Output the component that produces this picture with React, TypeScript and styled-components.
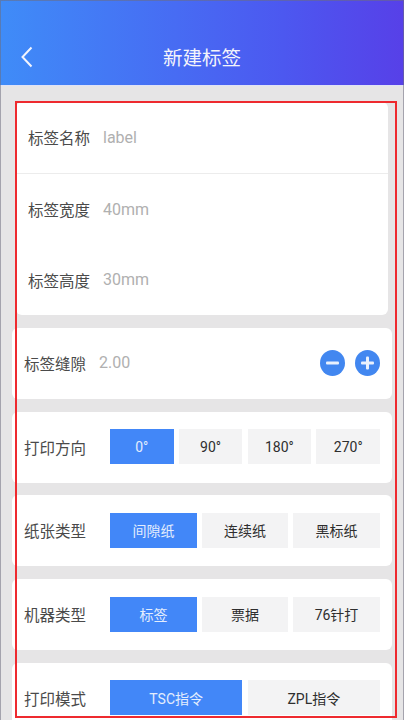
import React from 'react';
import styled, { createGlobalStyle } from 'styled-components';

const GlobalStyle = createGlobalStyle`
  html, body {
    margin: 0;
    padding: 0;
    background: #e6e5e6;
  }
  body {
    font-family: "Roboto", "Noto Sans CJK SC", sans-serif;
  }
`;

const Page = styled.div`
  position: relative;
  width: 404px;
  height: 720px;
  overflow: hidden;
  background: #e6e5e6;
  display: flex;
  flex-direction: column;
`;

const Header = styled.header`
  height: 86px;
  flex-shrink: 0;
  display: flex;
  align-items: center;
  justify-content: center;
  padding-top: 28px;
  box-sizing: border-box;
  position: relative;
  border-bottom: 1px solid #dfe2f6;
  background: linear-gradient(90deg, #3f8cf8 0%, #4c58f0 70%, #5740e8 100%);
`;

const BackButton = styled.div`
  position: absolute;
  left: 20px;
  top: 45px;
  width: 14px;
  height: 24px;
`;

const Title = styled.h1`
  margin: 0;
  font-size: 19.5px;
  font-weight: 400;
  color: #f4f4fb;
`;

const Content = styled.main`
  display: flex;
  flex-direction: column;
  gap: 12.7px;
  padding: 16px 12px 0;
`;

const InfoCard = styled.section`
  margin: 0 4px;
  background: #fff;
  border-radius: 6px;
  display: flex;
  flex-direction: column;
  height: 213.3px;
  flex-shrink: 0;
`;

const InfoRow = styled.div<{ $divided?: boolean }>`
  flex: 1;
  display: flex;
  align-items: center;
  gap: 13px;
  padding: 0 12px;
  border-bottom: ${props => (props.$divided ? '1px solid #ececec' : 'none')};
`;

const OptionCard = styled.section`
  background: #fff;
  border-radius: 6px;
  height: 71px;
  flex-shrink: 0;
  display: flex;
  align-items: center;
  padding: 0 12px 1px;
  box-sizing: border-box;
`;

const Label = styled.span`
  font-size: 15.5px;
  color: #4a4a4a;
  white-space: nowrap;
`;

const Value = styled.span`
  font-size: 16px;
  color: #b0b0b0;
`;

const GapValue = styled(Value)`
  margin-left: 13px;
  flex: 1;
`;

const RoundButtons = styled.div`
  display: flex;
  gap: 10.5px;
`;

const RoundButton = styled.div`
  width: 25px;
  height: 26px;
`;

const Segments = styled.div<{ $columns: string }>`
  margin-left: 24px;
  flex: 1;
  display: grid;
  grid-template-columns: ${props => props.$columns};
  gap: 5.3px;
  height: 35px;
`;

const Segment = styled.div<{ $active?: boolean }>`
  display: flex;
  align-items: center;
  justify-content: center;
  font-size: 14px;
  color: ${props => (props.$active ? '#e3edfd' : '#2e2e2e')};
  background: ${props => (props.$active ? '#4287f8' : '#f3f3f4')};
`;

const Highlight = styled.div`
  position: absolute;
  left: 15px;
  top: 101px;
  width: 382px;
  height: 617px;
  box-sizing: border-box;
  border: 2px solid #ee2a2f;
  pointer-events: none;
`;

// thin grey edge of the screenshot itself
const ScreenEdge = styled.div`
  position: absolute;
  inset: 0;
  box-sizing: border-box;
  border: 1px solid rgba(110, 110, 125, 0.55);
  border-bottom: none;
  pointer-events: none;
`;

interface OptionRow {
  label: string;
  columns: string;
  options: string[];
}

const optionRows: OptionRow[] = [
  { label: '打印方向', columns: 'repeat(4, 1fr)', options: ['0°', '90°', '180°', '270°'] },
  { label: '纸张类型', columns: '87px 1fr 87px', options: ['间隙纸', '连续纸', '黑标纸'] },
  { label: '机器类型', columns: '87px 1fr 87px', options: ['标签', '票据', '76针打'] },
  { label: '打印模式', columns: '1fr 1fr', options: ['TSC指令', 'ZPL指令'] },
];

const RoundIcon: React.FC<{ plus?: boolean }> = ({ plus }) => (
  <RoundButton>
    <svg width="25" height="26" viewBox="0 0 25 26">
      <ellipse cx="12.5" cy="13" rx="12.5" ry="13" fill="#4287f0" />
      <rect x="6" y="11.5" width="13" height="3" rx="1" fill="#e9f1fd" />
      {plus && <rect x="11" y="6.5" width="3" height="13" rx="1" fill="#e9f1fd" />}
    </svg>
  </RoundButton>
);

const App: React.FC = () => {
  return (
    <Page>
      <GlobalStyle />
      <Header>
        <BackButton>
          <svg width="14" height="24" viewBox="0 0 14 24" fill="none">
            <path d="M11.5 2.5 L2.5 12 L11.5 21.5" stroke="#f2f4fd" strokeWidth="2" />
          </svg>
        </BackButton>
        <Title>新建标签</Title>
      </Header>
      <Content>
        <InfoCard>
          <InfoRow $divided>
            <Label>标签名称</Label>
            <Value>label</Value>
          </InfoRow>
          <InfoRow>
            <Label>标签宽度</Label>
            <Value>40mm</Value>
          </InfoRow>
          <InfoRow>
            <Label>标签高度</Label>
            <Value>30mm</Value>
          </InfoRow>
        </InfoCard>
        <OptionCard>
          <Label>标签缝隙</Label>
          <GapValue>2.00</GapValue>
          <RoundButtons>
            <RoundIcon />
            <RoundIcon plus />
          </RoundButtons>
        </OptionCard>
        {optionRows.map(row => (
          <OptionCard key={row.label}>
            <Label>{row.label}</Label>
            <Segments $columns={row.columns}>
              {row.options.map((option, index) => (
                <Segment key={option} $active={index === 0}>
                  {option}
                </Segment>
              ))}
            </Segments>
          </OptionCard>
        ))}
      </Content>
      <Highlight />
      <ScreenEdge />
    </Page>
  );
};

export default App;
